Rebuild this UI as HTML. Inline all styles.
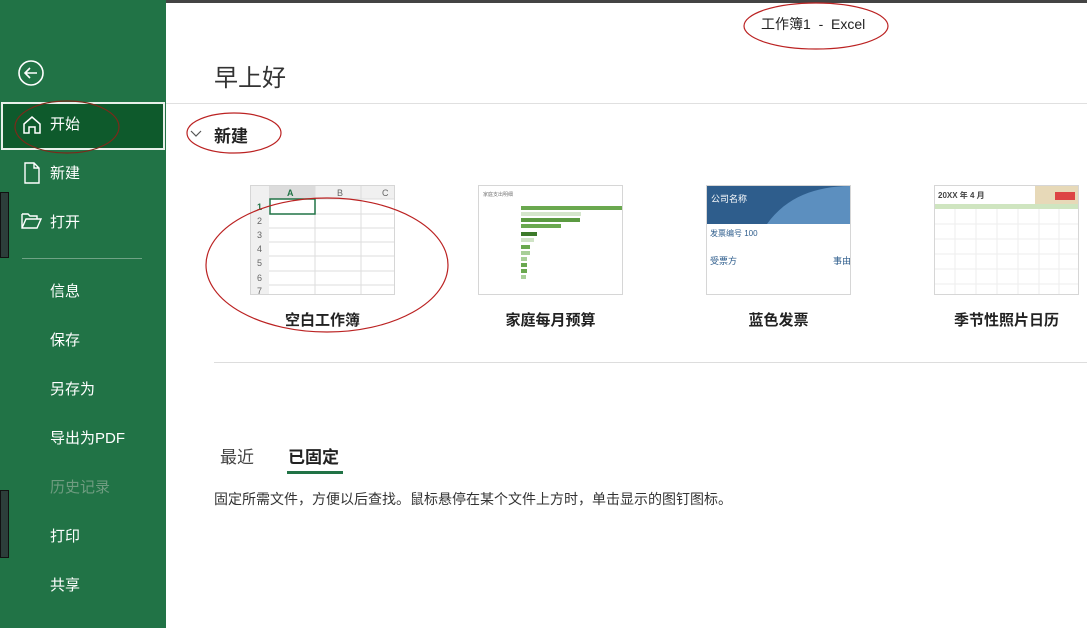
<!DOCTYPE html>
<html><head><meta charset="utf-8"><style>
*{margin:0;padding:0;box-sizing:border-box}
body{width:1087px;height:628px;overflow:hidden;background:#fff;font-family:"Liberation Sans","Noto Sans CJK SC",sans-serif;position:relative;color:#222}
.a{position:absolute;white-space:nowrap}
#side{position:absolute;left:0;top:0;width:166px;height:628px;background:#217346}
.it{position:absolute;left:50px;color:#fff;font-size:15px}
.lbl{position:absolute;font-size:15px;font-weight:bold;color:#222;text-align:center;width:145px}
.th{position:absolute;top:185px;width:145px;height:110px;border:1px solid #d6d6d6;background:#fff;overflow:hidden}
</style></head><body>
<div class="a" style="left:0;top:0;width:1087px;height:3px;background:#444"></div>
<div id="side">
 <svg class="a" style="left:17px;top:59px" width="28" height="28"><circle cx="14" cy="14" r="12" fill="none" stroke="#fff" stroke-width="1.6"/><path d="M20 14H8M13 9l-5 5 5 5" fill="none" stroke="#fff" stroke-width="1.6"/></svg>
 <div class="a" style="left:1px;top:102px;width:164px;height:48px;background:#0e5a2c;border:2px solid #e8f0ea"></div>
 <svg class="a" style="left:21px;top:114px" width="22" height="22"><path d="M3 10L11 3l8 7v9h-5v-6H8v6H3z" fill="none" stroke="#fff" stroke-width="1.5"/></svg>
 <div class="it" style="top:113px">开始</div>
 <svg class="a" style="left:23px;top:162px" width="18" height="22"><path d="M2 1h9l5 5v15H2zM11 1v5h5" fill="none" stroke="#fff" stroke-width="1.4"/></svg>
 <div class="it" style="top:162px">新建</div>
 <svg class="a" style="left:21px;top:212px" width="22" height="18"><path d="M1 2h6l2 2h7v3M1 2v14h15l4-9H5L1 16" fill="none" stroke="#fff" stroke-width="1.4"/></svg>
 <div class="it" style="top:211px">打开</div>
 <div class="a" style="left:22px;top:258px;width:120px;height:1px;background:#6fa285"></div>
 <div class="it" style="top:280px">信息</div>
 <div class="it" style="top:329px">保存</div>
 <div class="it" style="top:378px">另存为</div>
 <div class="it" style="top:427px">导出为PDF</div>
 <div class="it" style="top:476px;color:#6f9c80">历史记录</div>
 <div class="it" style="top:525px">打印</div>
 <div class="it" style="top:574px">共享</div>
 <div class="a" style="left:0;top:192px;width:9px;height:66px;background:#2c3e3a;border:1px solid #111"></div>
 <div class="a" style="left:0;top:490px;width:9px;height:68px;background:#2c3e3a;border:1px solid #111"></div>
</div>
<div class="a" style="left:761px;top:14px;font-size:14px">工作簿1 &nbsp;- &nbsp;Excel</div>
<div class="a" style="left:214px;top:58px;font-size:24px;color:#333">早上好</div>
<div class="a" style="left:166px;top:103px;width:921px;height:1px;background:#e0e0e0"></div>
<svg class="a" style="left:190px;top:129px" width="12" height="10"><path d="M1 2l5 5 5-5" fill="none" stroke="#555" stroke-width="1.2"/></svg>
<div class="a" style="left:214px;top:122px;font-size:17px;font-weight:bold">新建</div>
<div class="th" style="left:250px">
 <svg width="145" height="110"><rect x="0" y="0" width="145" height="13" fill="#f0f0f0"/><rect x="0" y="0" width="18" height="110" fill="#f0f0f0"/><rect x="18" y="0" width="46" height="13" fill="#dcdcdc"/>
 <g stroke="#ddd"><path d="M64 0v110M110 0v110M18 13h127M18 28h127M18 42h127M18 56h127M18 70h127M18 85h127M18 99h127"/></g>
 <rect x="19" y="13" width="45" height="15" fill="none" stroke="#217346" stroke-width="1.5"/>
 <g font-size="9" fill="#666"><text x="36" y="10" fill="#217346" font-weight="bold">A</text><text x="86" y="10">B</text><text x="131" y="10">C</text><text x="6" y="24" fill="#217346" font-weight="bold">1</text><text x="6" y="38">2</text><text x="6" y="52">3</text><text x="6" y="66">4</text><text x="6" y="80">5</text><text x="6" y="95">6</text><text x="6" y="108">7</text></g></svg></div>
<div class="th" style="left:478px">
 <svg width="145" height="110"><text x="4" y="10" font-size="5" fill="#777">家庭支出明细</text><g fill="#6aa84f"><rect x="42" y="20" width="101" height="4"/><rect x="42" y="26" width="60" height="4" fill="#d5e6cc"/><rect x="42" y="32" width="59" height="4" fill="#5b9a41"/><rect x="42" y="38" width="40" height="4"/><rect x="42" y="46" width="16" height="4" fill="#3c7a2a"/><rect x="42" y="52" width="13" height="4" fill="#cfe3c5"/><rect x="42" y="59" width="9" height="4"/><rect x="42" y="65" width="9" height="4" fill="#a8cf98"/><rect x="42" y="71" width="6" height="4" fill="#a8cf98"/><rect x="42" y="77" width="6" height="4"/><rect x="42" y="83" width="6" height="4"/><rect x="42" y="89" width="5" height="4" fill="#a8cf98"/></g></svg></div>
<div class="th" style="left:706px">
 <svg width="145" height="110"><rect width="145" height="38" fill="#2e5d8c"/><path d="M60 38C80 10 110 0 145 0v38z" fill="#5c8fbf"/><text x="4" y="16" font-size="9" fill="#fff">公司名称</text><text x="3" y="50" font-size="8" fill="#2e5d8c">发票编号 100</text><text x="3" y="78" font-size="9" fill="#2e5d8c">受票方</text><text x="126" y="78" font-size="9" fill="#2e5d8c">事由</text></svg></div>
<div class="th" style="left:934px">
 <svg width="145" height="110"><rect x="100" y="0" width="45" height="18" fill="#e7d9b8"/><rect x="120" y="6" width="20" height="8" fill="#d44"/><text x="3" y="12" font-size="8" font-weight="bold" fill="#444">20XX 年 4 月</text><rect x="0" y="18" width="145" height="5" fill="#cfe5c0"/><g stroke="#eee"><path d="M0 38h145M0 53h145M0 68h145M0 83h145M0 98h145M20 23v87M41 23v87M62 23v87M83 23v87M104 23v87M124 23v87"/></g></svg></div>
<div class="lbl" style="left:250px;top:309px">空白工作簿</div>
<div class="lbl" style="left:478px;top:309px">家庭每月预算</div>
<div class="lbl" style="left:706px;top:309px">蓝色发票</div>
<div class="lbl" style="left:934px;top:309px">季节性照片日历</div>
<div class="a" style="left:214px;top:362px;width:873px;height:1px;background:#ddd"></div>
<div class="a" style="left:220px;top:443px;font-size:17px;color:#444">最近</div>
<div class="a" style="left:288px;top:443px;font-size:17px;font-weight:bold">已固定</div>
<div class="a" style="left:287px;top:471px;width:56px;height:3px;background:#217346"></div>
<div class="a" style="left:214px;top:489px;font-size:14px;color:#333">固定所需文件，方便以后查找。鼠标悬停在某个文件上方时，单击显示的图钉图标。</div>
<svg class="a" style="left:0;top:0" width="1087" height="628"><g fill="none" stroke="#b22" stroke-width="1.2"><ellipse cx="67" cy="127" rx="52" ry="26" stroke="#7a2a1a"/><ellipse cx="234" cy="133" rx="47" ry="20"/><ellipse cx="816" cy="26" rx="72" ry="23"/><ellipse cx="327" cy="265" rx="121" ry="67"/></g></svg>
</body></html>
